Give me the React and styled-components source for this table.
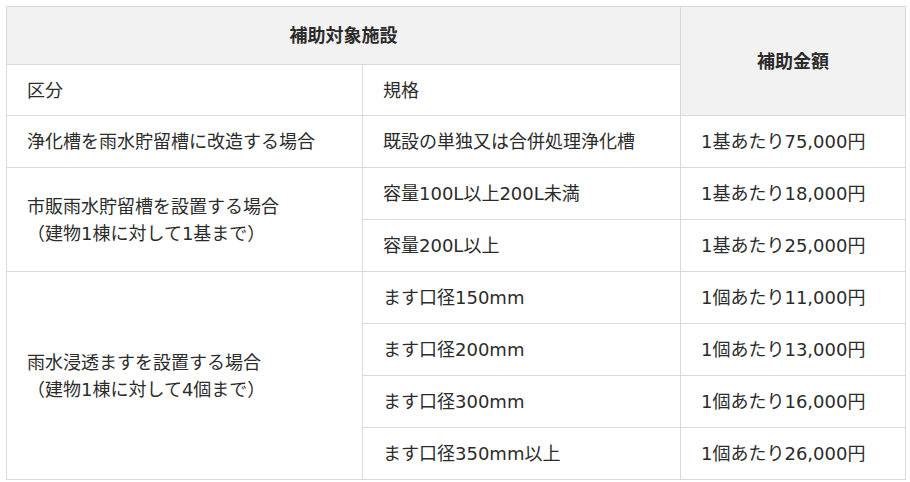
import React from 'react';
import styled, { createGlobalStyle } from 'styled-components';

const GlobalStyle = createGlobalStyle`
  body {
    margin: 0;
    background: #fff;
    font-family: "DejaVu Sans", "Noto Sans CJK JP", sans-serif;
    color: #2b2b2b;
  }
`;

const Wrapper = styled.div`
  padding: 6px 5px 0 6px;
`;

const Table = styled.table`
  width: 899px;
  border-collapse: collapse;
  table-layout: fixed;
  font-size: 18px;
  line-height: 27px;
`;

const Row = styled.tr`
  height: ${props => props.h || 52}px;
`;

const HeadCell = styled.th`
  background-color: #f2f2f2;
  border: 1px solid #d9d9d9;
  font-weight: bold;
  text-align: center;
  padding: 0 20px;
  color: #2b2b2b;
`;

const Cell = styled.td`
  border: 1px solid #d9d9d9;
  padding: 0 20px;
  text-align: left;
  vertical-align: middle;
  color: #2b2b2b;
`;

const rows = [
  { kind: '浄化槽を雨水貯留槽に改造する場合', span: 1, spec: '既設の単独又は合併処理浄化槽', amount: '1基あたり75,000円' },
  { kind: '市販雨水貯留槽を設置する場合', note: '（建物1棟に対して1基まで）', span: 2, spec: '容量100L以上200L未満', amount: '1基あたり18,000円' },
  { spec: '容量200L以上', amount: '1基あたり25,000円' },
  { kind: '雨水浸透ますを設置する場合', note: '（建物1棟に対して4個まで）', span: 4, spec: 'ます口径150mm', amount: '1個あたり11,000円' },
  { spec: 'ます口径200mm', amount: '1個あたり13,000円' },
  { spec: 'ます口径300mm', amount: '1個あたり16,000円' },
  { spec: 'ます口径350mm以上', amount: '1個あたり26,000円' },
];

export default function App() {
  return (
    <Wrapper>
      <GlobalStyle />
      <Table>
        <colgroup>
          <col style={{ width: 356 }} />
          <col style={{ width: 318 }} />
          <col style={{ width: 225 }} />
        </colgroup>
        <tbody>
          <Row h={58}>
            <HeadCell colSpan={2}>補助対象施設</HeadCell>
            <HeadCell rowSpan={2}>補助金額</HeadCell>
          </Row>
          <Row h={51}>
            <Cell>区分</Cell>
            <Cell>規格</Cell>
          </Row>
          {rows.map((r, i) => (
            <Row key={i}>
              {r.kind && (
                <Cell rowSpan={r.span}>
                  {r.kind}
                  {r.note && <><br />{r.note}</>}
                </Cell>
              )}
              <Cell>{r.spec}</Cell>
              <Cell>{r.amount}</Cell>
            </Row>
          ))}
        </tbody>
      </Table>
    </Wrapper>
  );
}
